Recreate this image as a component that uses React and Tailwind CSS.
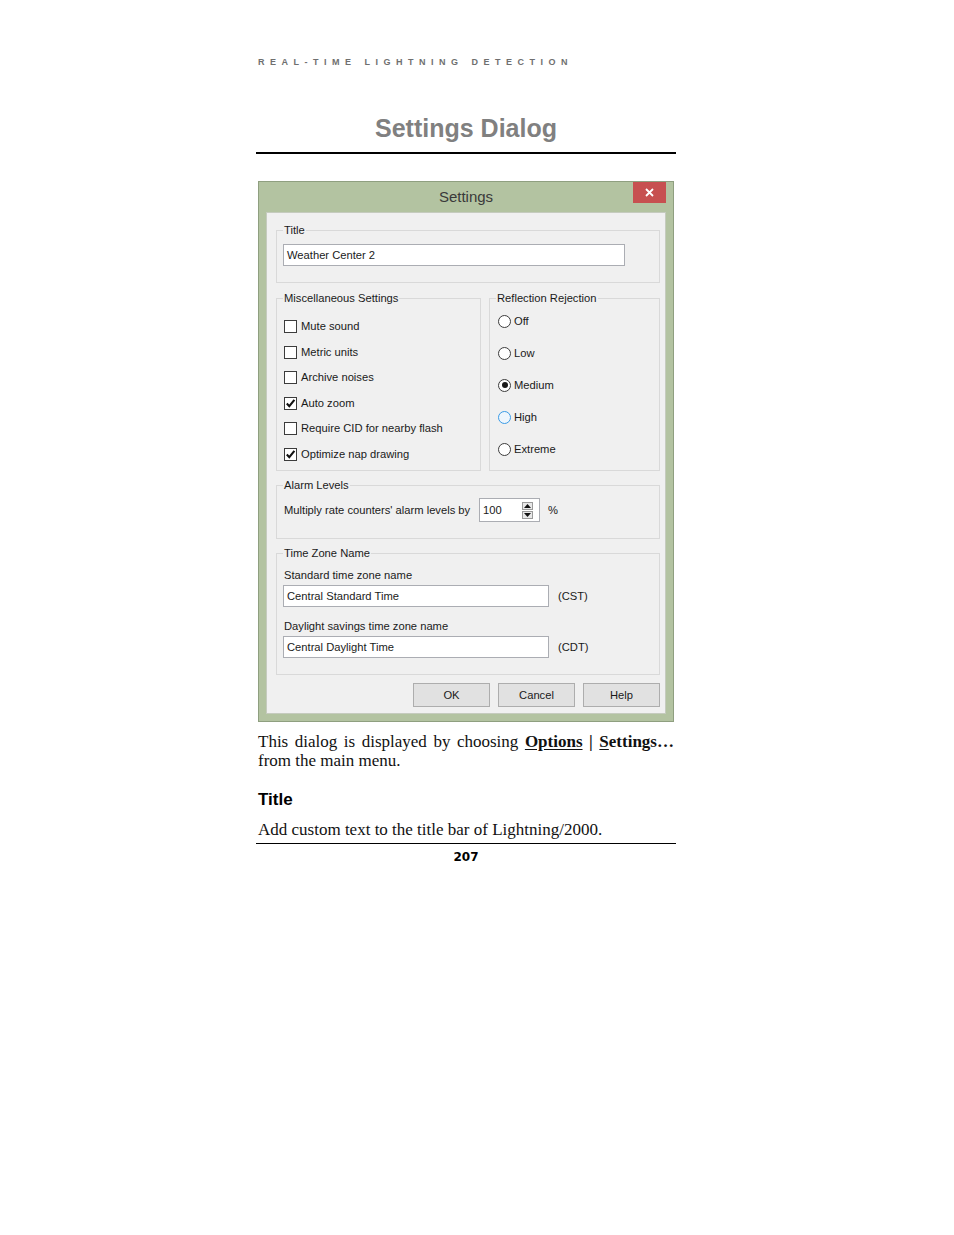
import React from "react";

function Check({ checked, label }) {
  return (
    <div className="flex items-center h-[25.5px]">
      <div className="w-[13px] h-[13px] border border-[#3c3c3c] bg-white flex items-center justify-center shrink-0">
        {checked && (
          <svg width="11" height="11" viewBox="0 0 11 11">
            <path d="M1.8 5.6 L4.3 8.2 L9.4 1.9" fill="none" stroke="#111" strokeWidth="2.1" />
          </svg>
        )}
      </div>
      <span className="ml-[4px]">{label}</span>
    </div>
  );
}

function Radio({ checked, hot, label }) {
  return (
    <div className="flex items-center h-[32px]">
      <div
        className={
          hot
            ? "w-[13px] h-[13px] rounded-full border border-[#3a9be6] bg-[#eef6fd] flex items-center justify-center shrink-0"
            : "w-[13px] h-[13px] rounded-full border border-[#3c3c3c] bg-white flex items-center justify-center shrink-0"
        }
      >
        {checked && <div className="w-[6px] h-[6px] rounded-full bg-[#1a1a1a]" />}
      </div>
      <span className="ml-[3px]">{label}</span>
    </div>
  );
}

function Group({ label, className = "", children }) {
  return (
    <fieldset className={"border border-[#d9d9d9] m-0 p-0 min-w-0 " + className}>
      <legend className="ml-[6px] px-[1px] leading-[14px] text-[#1a1a1a]">{label}</legend>
      {children}
    </fieldset>
  );
}

function Field({ value, className = "" }) {
  return (
    <div className={"h-[22px] border border-[#abadb3] bg-white flex items-center pl-[3px] " + className}>
      {value}
    </div>
  );
}

function Btn({ children }) {
  return (
    <div className="w-[77px] h-[24px] border border-[#adadad] bg-[#e1e1e1] flex items-center justify-center">
      {children}
    </div>
  );
}

export default function App() {
  return (
    <div className="w-[954px] h-[1235px] bg-white font-['Liberation_Sans',Arial,sans-serif]">
      <div className="ml-[256px] w-[420px] pt-[57px]">
        <div className="pl-[2px] text-[9px] leading-[10px] font-bold tracking-[5.5px] text-[#6f6f6f] whitespace-nowrap">
          REAL-TIME LIGHTNING DETECTION
        </div>
        <h1 className="mt-[47px] text-center text-[25px] leading-[28px] font-bold text-[#808080]">
          Settings Dialog
        </h1>
        <div className="mt-[10px] h-[2px] bg-black" />

        {/* Dialog */}
        <div className="ml-[2px] mt-[27px] w-[416px] border border-[#8f9f80] bg-[#b3c3a1] flex flex-col">
          <div className="relative h-[30px] flex items-center justify-center">
            <span className="text-[15px] text-[#3a3a3a]">Settings</span>
            <div className="absolute right-[7px] top-0 w-[33px] h-[21px] bg-[#c75050] flex items-center justify-center">
              <svg width="9" height="9" viewBox="0 0 9 9">
                <path d="M1 1 L8 8 M8 1 L1 8" stroke="white" strokeWidth="1.8" />
              </svg>
            </div>
          </div>
          <div className="mx-[7px] mb-[7px] border border-[#c5cbbe] bg-[#f0f0f0] pl-[9px] pr-[5px] pt-[10px] pb-[6px] text-[11.2px] text-[#1a1a1a]">
            <Group label="Title">
              <div className="pt-[7px] pb-[16px] pl-[6px]">
                <Field value="Weather Center 2" className="w-[342px]" />
              </div>
            </Group>

            <div className="mt-[8px] flex gap-[8px] items-stretch">
              <Group label="Miscellaneous Settings" className="w-[205px]">
                <div className="pl-[7px] pt-[9px] pb-[3px]">
                  <Check label="Mute sound" />
                  <Check label="Metric units" />
                  <Check label="Archive noises" />
                  <Check label="Auto zoom" checked />
                  <Check label="Require CID for nearby flash" />
                  <Check label="Optimize nap drawing" checked />
                </div>
              </Group>
              <Group label="Reflection Rejection" className="w-[171px]">
                <div className="pl-[8px] pb-[5px]">
                  <Radio label="Off" />
                  <Radio label="Low" />
                  <Radio label="Medium" checked />
                  <Radio label="High" hot />
                  <Radio label="Extreme" />
                </div>
              </Group>
            </div>

            <Group label="Alarm Levels" className="mt-[7px]">
              <div className="pl-[7px] pt-[6px] pb-[16px] flex items-center h-[46px]">
                <span className="w-[195px] whitespace-nowrap">Multiply rate counters' alarm levels by</span>
                <div className="w-[61px] h-[24px] border border-[#abadb3] bg-white flex items-center pl-[3px] pr-[6px]">
                  <span className="flex-1">100</span>
                  <div className="flex flex-col gap-[1px]">
                    <div className="w-[11px] h-[8px] border border-[#9a9a9a] bg-[#e8e8e8] flex items-center justify-center">
                      <svg width="7" height="4" viewBox="0 0 7 4"><path d="M0 4 L3.5 0 L7 4 Z" fill="#111" /></svg>
                    </div>
                    <div className="w-[11px] h-[8px] border border-[#9a9a9a] bg-[#e8e8e8] flex items-center justify-center">
                      <svg width="7" height="4" viewBox="0 0 7 4"><path d="M0 0 L3.5 4 L7 0 Z" fill="#111" /></svg>
                    </div>
                  </div>
                </div>
                <span className="ml-[8px]">%</span>
              </div>
            </Group>

            <Group label="Time Zone Name" className="mt-[7px]">
              <div className="pl-[6px] pt-[8px] pb-[16px]">
                <div className="pl-[1px] leading-[14px]">Standard time zone name</div>
                <div className="mt-[3px] flex items-center">
                  <Field value="Central Standard Time" className="w-[266px]" />
                  <span className="ml-[9px]">(CST)</span>
                </div>
                <div className="mt-[12px] pl-[1px] leading-[14px]">Daylight savings time zone name</div>
                <div className="mt-[3px] flex items-center">
                  <Field value="Central Daylight Time" className="w-[266px]" />
                  <span className="ml-[9px]">(CDT)</span>
                </div>
              </div>
            </Group>

            <div className="mt-[8px] flex justify-end gap-[8px]">
              <Btn>OK</Btn>
              <Btn>Cancel</Btn>
              <Btn>Help</Btn>
            </div>
          </div>
        </div>

        <p className="mx-[2px] mt-[10px] text-[17px] leading-[19px] text-justify text-[#111] font-['Liberation_Serif','Times_New_Roman',serif]">
          This dialog is displayed by choosing{" "}
          <b className="underline underline-offset-2">Options</b> <b>|</b>{" "}
          <b>
            <span className="underline underline-offset-2">S</span>ettings…
          </b>{" "}
          from the main menu.
        </p>
        <h2 className="ml-[2px] mt-[20px] text-[17px] leading-[20px] font-bold text-black">Title</h2>
        <p className="ml-[2px] mt-[10px] text-[17px] leading-[19px] text-[#111] font-['Liberation_Serif','Times_New_Roman',serif]">
          Add custom text to the title bar of Lightning/2000.
        </p>
        <div className="mt-[4px] h-[1px] bg-black" />
        <div className="mt-[7px] text-center text-[12px] leading-[12px] font-bold text-black font-['DejaVu_Sans',sans-serif]">
          207
        </div>
      </div>
    </div>
  );
}
